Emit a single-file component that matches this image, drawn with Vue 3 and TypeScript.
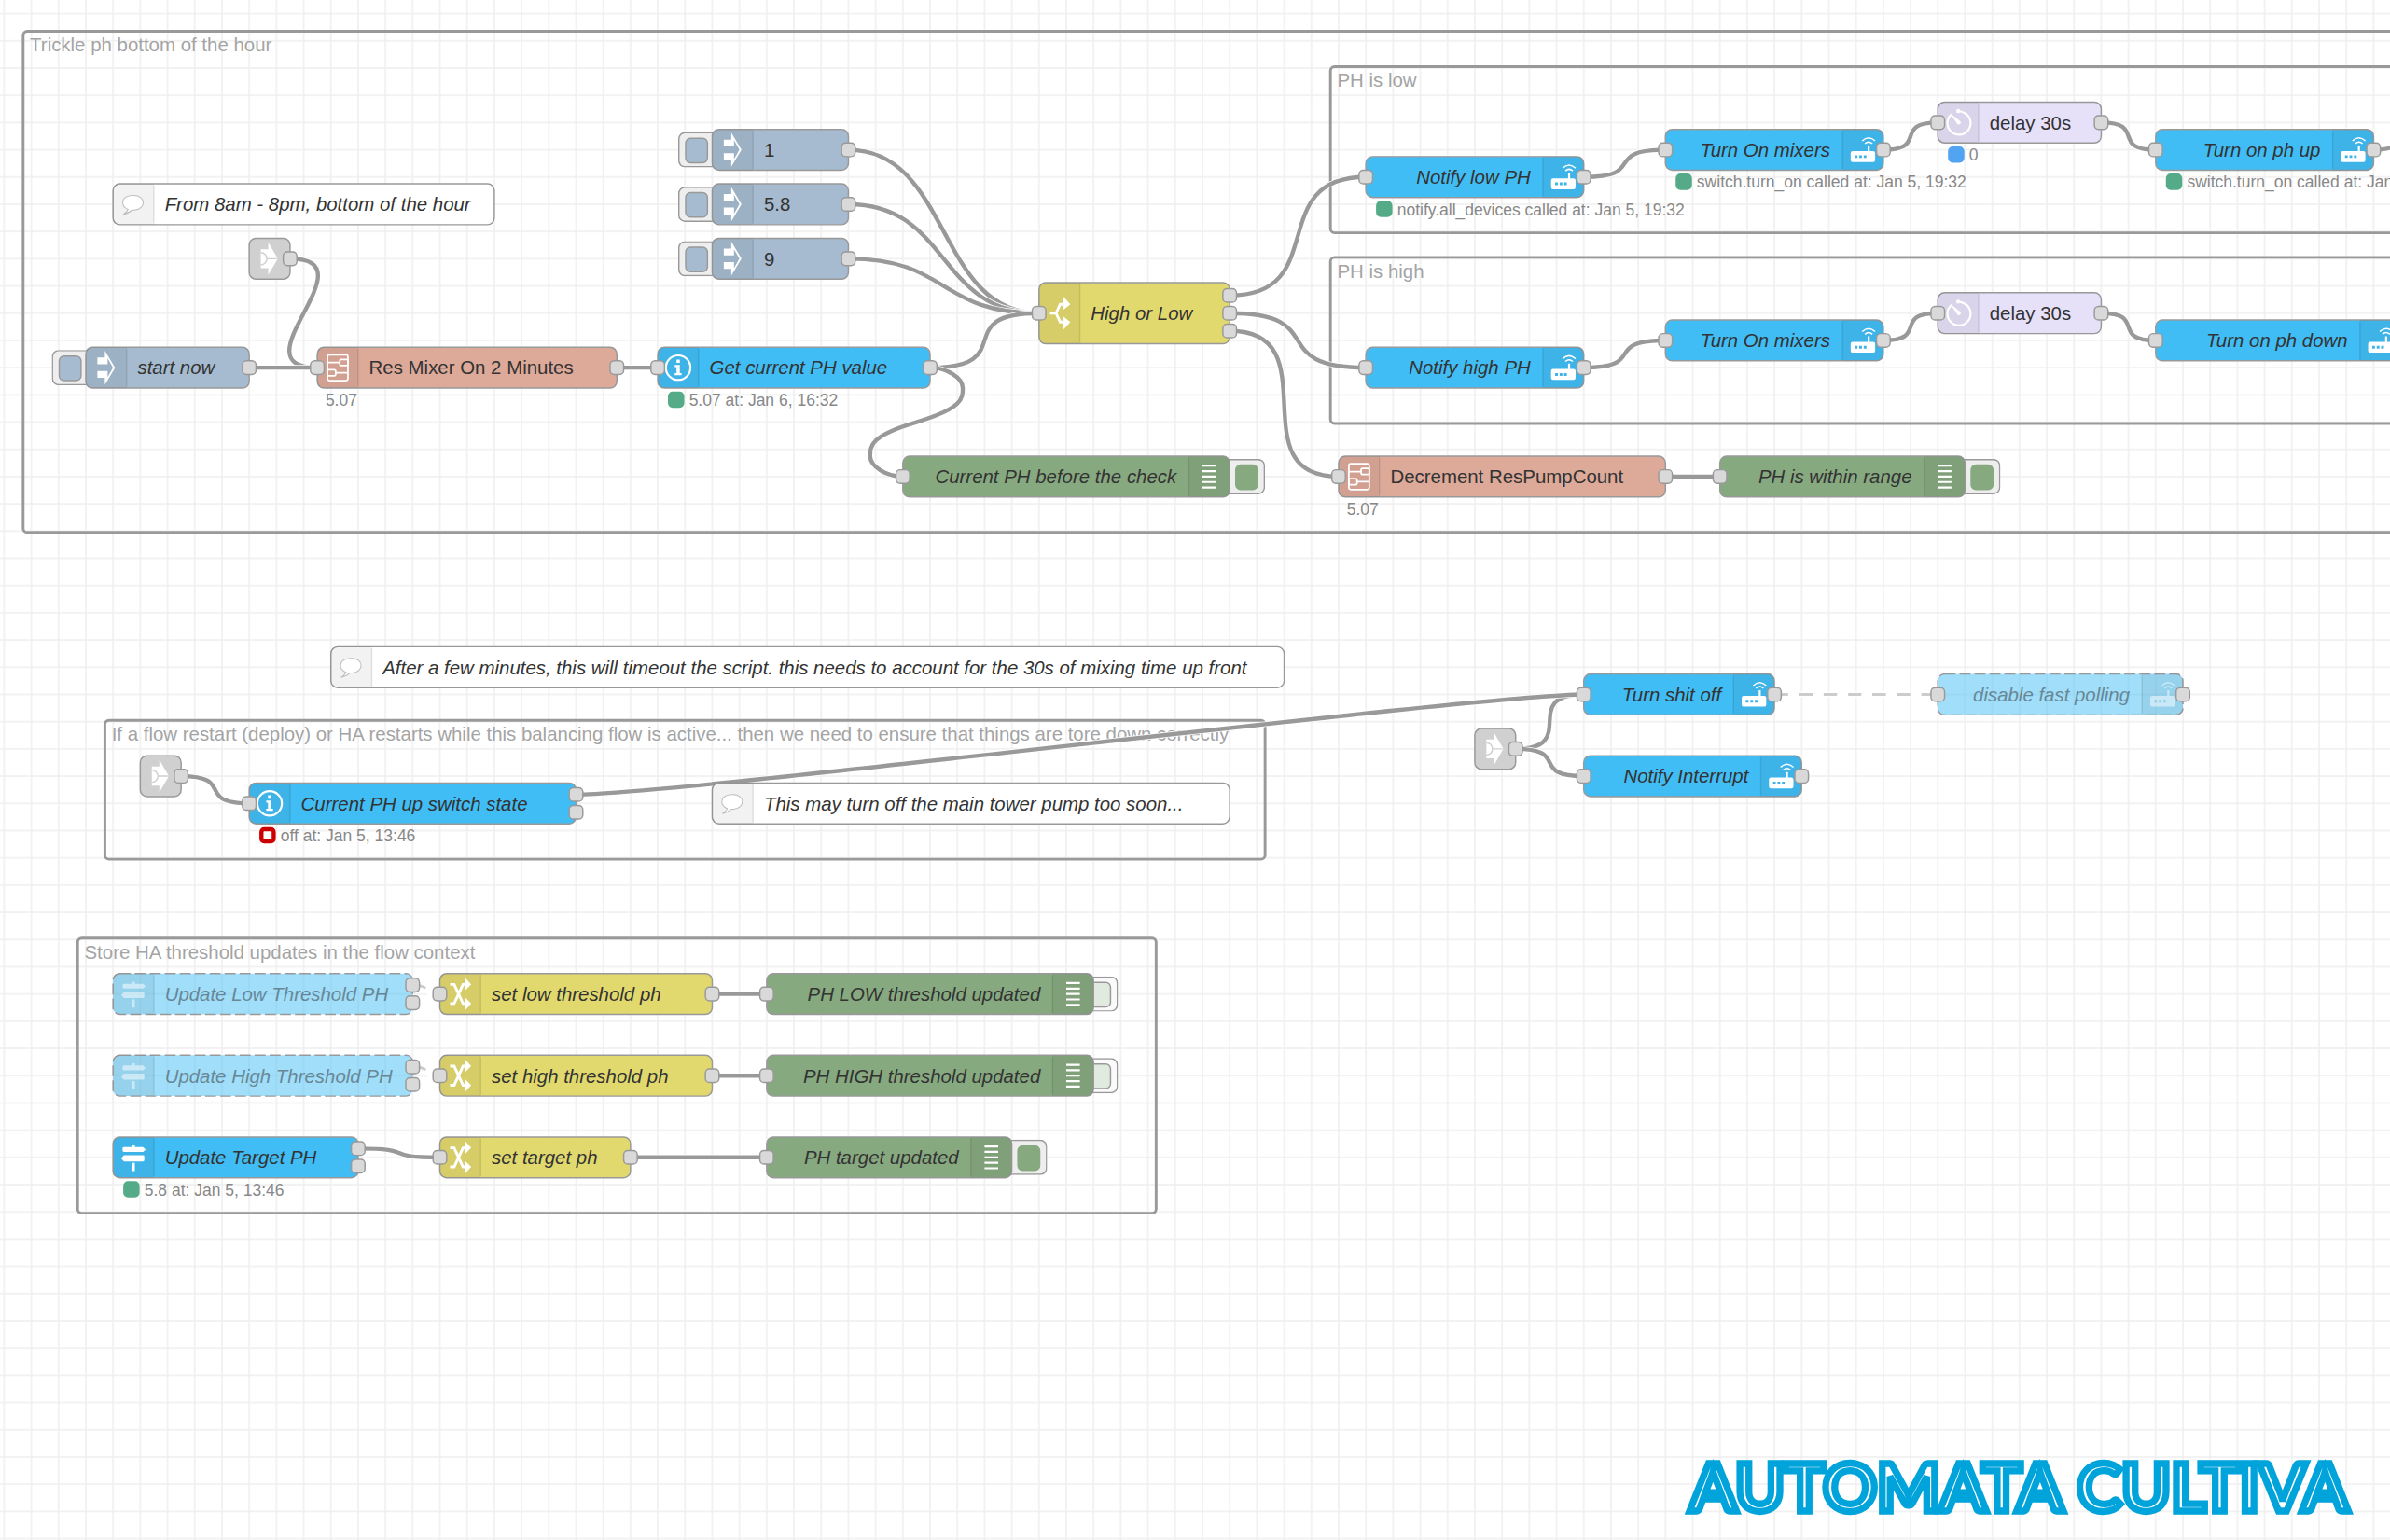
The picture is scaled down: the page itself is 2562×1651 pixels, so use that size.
<script setup lang="ts">
type Kind = 'inject' | 'debug' | 'subflow' | 'state' | 'service' | 'events' | 'switch' | 'change' | 'delay' | 'comment' | 'link'

interface FlowNode {
  id: string
  kind: Kind
  x: number
  cy: number
  w: number
  label?: string
  plain?: boolean
  inputs?: number
  outputs?: number
  off?: boolean
  muted?: boolean
  status?: { text: string; dot?: 'green' | 'blue' | 'ring' }
}

interface Group { x: number; y: number; w: number; h: number; label: string }

const groups: Group[] = [
  { x: 17, y: 23, w: 1900, h: 368, label: 'Trickle ph bottom of the hour' },
  { x: 977, y: 49, w: 900, h: 122, label: 'PH is low' },
  { x: 977, y: 189, w: 900, h: 122, label: 'PH is high' },
  { x: 77, y: 529, w: 852, h: 102, label: 'If a flow restart (deploy) or HA restarts while this balancing flow is active... then we need to ensure that things are tore down correctly' },
  { x: 57, y: 689, w: 792, h: 202, label: 'Store HA threshold updates in the flow context' },
]

const nodes: FlowNode[] = [
  { id: 'c1', kind: 'comment', x: 83, cy: 150, w: 280, label: 'From 8am - 8pm, bottom of the hour' },
  { id: 'l1', kind: 'link', x: 183, cy: 190, w: 30, outputs: 1 },
  { id: 'start', kind: 'inject', x: 63, cy: 270, w: 120, label: 'start now', outputs: 1 },
  { id: 'res', kind: 'subflow', x: 233, cy: 270, w: 220, label: 'Res Mixer On 2 Minutes', plain: true, inputs: 1, outputs: 1, status: { text: '5.07' } },
  { id: 'get', kind: 'state', x: 483, cy: 270, w: 200, label: 'Get current PH value', inputs: 1, outputs: 1, status: { text: '5.07 at: Jan 6, 16:32', dot: 'green' } },
  { id: 'i1', kind: 'inject', x: 523, cy: 110, w: 100, label: '1', plain: true, outputs: 1 },
  { id: 'i2', kind: 'inject', x: 523, cy: 150, w: 100, label: '5.8', plain: true, outputs: 1 },
  { id: 'i3', kind: 'inject', x: 523, cy: 190, w: 100, label: '9', plain: true, outputs: 1 },
  { id: 'sw', kind: 'switch', x: 763, cy: 230, w: 140, label: 'High or Low', inputs: 1, outputs: 3 },
  { id: 'd1', kind: 'debug', x: 663, cy: 350, w: 240, label: 'Current PH before the check', inputs: 1 },
  { id: 'nl', kind: 'service', x: 1003, cy: 130, w: 160, label: 'Notify low PH', inputs: 1, outputs: 1, status: { text: 'notify.all_devices called at: Jan 5, 19:32', dot: 'green' } },
  { id: 'm1', kind: 'service', x: 1223, cy: 110, w: 160, label: 'Turn On mixers', inputs: 1, outputs: 1, status: { text: 'switch.turn_on called at: Jan 5, 19:32', dot: 'green' } },
  { id: 't1', kind: 'delay', x: 1423, cy: 90, w: 120, label: 'delay 30s', plain: true, inputs: 1, outputs: 1, status: { text: '0', dot: 'blue' } },
  { id: 'up', kind: 'service', x: 1583, cy: 110, w: 160, label: 'Turn on ph up', inputs: 1, outputs: 1, status: { text: 'switch.turn_on called at: Jan 5, 19:32', dot: 'green' } },
  { id: 't3', kind: 'delay', x: 1783, cy: 90, w: 120, inputs: 1, outputs: 1 },
  { id: 'nh', kind: 'service', x: 1003, cy: 270, w: 160, label: 'Notify high PH', inputs: 1, outputs: 1 },
  { id: 'm2', kind: 'service', x: 1223, cy: 250, w: 160, label: 'Turn On mixers', inputs: 1, outputs: 1 },
  { id: 't2', kind: 'delay', x: 1423, cy: 230, w: 120, label: 'delay 30s', plain: true, inputs: 1, outputs: 1 },
  { id: 'dn', kind: 'service', x: 1583, cy: 250, w: 180, label: 'Turn on ph down', inputs: 1, outputs: 1 },
  { id: 'dec', kind: 'subflow', x: 983, cy: 350, w: 240, label: 'Decrement ResPumpCount', plain: true, inputs: 1, outputs: 1, status: { text: '5.07' } },
  { id: 'd2', kind: 'debug', x: 1263, cy: 350, w: 180, label: 'PH is within range', inputs: 1 },
  { id: 'c2', kind: 'comment', x: 243, cy: 490, w: 700, label: 'After a few minutes, this will timeout the script. this needs to account for the 30s of mixing time up front' },
  { id: 'l2', kind: 'link', x: 103, cy: 570, w: 30, outputs: 1 },
  { id: 'cur', kind: 'state', x: 183, cy: 590, w: 240, label: 'Current PH up switch state', inputs: 1, outputs: 2, status: { text: 'off at: Jan 5, 13:46', dot: 'ring' } },
  { id: 'c3', kind: 'comment', x: 523, cy: 590, w: 380, label: 'This may turn off the main tower pump too soon...' },
  { id: 'l3', kind: 'link', x: 1083, cy: 550, w: 30, outputs: 1 },
  { id: 'off', kind: 'service', x: 1163, cy: 510, w: 140, label: 'Turn shit off', inputs: 1, outputs: 1 },
  { id: 'fast', kind: 'service', x: 1423, cy: 510, w: 180, label: 'disable fast polling', inputs: 1, outputs: 1, off: true },
  { id: 'int', kind: 'service', x: 1163, cy: 570, w: 160, label: 'Notify Interrupt', inputs: 1, outputs: 1 },
  { id: 'ul', kind: 'events', x: 83, cy: 730, w: 220, label: 'Update Low Threshold PH', outputs: 2, off: true },
  { id: 'sl', kind: 'change', x: 323, cy: 730, w: 200, label: 'set low threshold ph', inputs: 1, outputs: 1 },
  { id: 'd3', kind: 'debug', x: 563, cy: 730, w: 240, label: 'PH LOW threshold updated', inputs: 1, muted: true },
  { id: 'uh', kind: 'events', x: 83, cy: 790, w: 220, label: 'Update High Threshold PH', outputs: 2, off: true },
  { id: 'sh', kind: 'change', x: 323, cy: 790, w: 200, label: 'set high threshold ph', inputs: 1, outputs: 1 },
  { id: 'd4', kind: 'debug', x: 563, cy: 790, w: 240, label: 'PH HIGH threshold updated', inputs: 1, muted: true },
  { id: 'ut', kind: 'events', x: 83, cy: 850, w: 180, label: 'Update Target PH', outputs: 2, status: { text: '5.8 at: Jan 5, 13:46', dot: 'green' } },
  { id: 'st', kind: 'change', x: 323, cy: 850, w: 140, label: 'set target ph', inputs: 1, outputs: 1 },
  { id: 'd5', kind: 'debug', x: 563, cy: 850, w: 180, label: 'PH target updated', inputs: 1 },
]

// [source node, output index, target node]
const wires: [string, number, string][] = [
  ['l1', 0, 'res'], ['start', 0, 'res'], ['res', 0, 'get'],
  ['i1', 0, 'sw'], ['i2', 0, 'sw'], ['i3', 0, 'sw'], ['get', 0, 'sw'], ['get', 0, 'd1'],
  ['sw', 0, 'nl'], ['sw', 1, 'nh'], ['sw', 2, 'dec'], ['dec', 0, 'd2'],
  ['nl', 0, 'm1'], ['m1', 0, 't1'], ['t1', 0, 'up'], ['up', 0, 't3'],
  ['nh', 0, 'm2'], ['m2', 0, 't2'], ['t2', 0, 'dn'],
  ['l2', 0, 'cur'], ['l3', 0, 'off'], ['l3', 0, 'int'], ['cur', 0, 'off'], ['off', 0, 'fast'],
  ['ul', 0, 'sl'], ['sl', 0, 'd3'], ['uh', 0, 'sh'], ['sh', 0, 'd4'], ['ut', 0, 'st'], ['st', 0, 'd5'],
]

const height = (n: FlowNode) => Math.max(30, (n.outputs ?? 0) * 15)
const iconRight = (n: FlowNode) => n.kind === 'debug' || n.kind === 'service'
const portY = (n: FlowNode, i: number) => height(n) / 2 - (((n.outputs ?? 1) - 1) / 2) * 13 + i * 13
const find = (id: string) => nodes.find((n) => n.id === id) as FlowNode

function curve(x1: number, y1: number, x2: number, y2: number): string {
  const span = 100
  const dx = x2 - x1
  const dy = y2 - y1
  const dist = Math.hypot(dx, dy)
  if (dx > 0) {
    const reach = dist < span ? 0.75 * dist : 75
    return `M${x1} ${y1}C${x1 + reach} ${y1} ${x2 - reach} ${y2} ${x2} ${y2}`
  }
  const reach = span * (0.4 - 0.2 * Math.max(0, (span - Math.min(Math.abs(dx), Math.abs(dy))) / span))
  const half = 15
  const midX = x2 - dx / 2
  const midY = y2 - dy / 2
  const quarter = (y2 + midY) / 2
  const topX = x1 + reach
  const topY = Math.min(quarter - dy / 2, y1 + half)
  const bottomX = x2 - reach
  const bottomY = Math.max(quarter, y2 - half)
  return `M${x1} ${y1}C${(x1 + topX) / 2} ${y1} ${topX} ${topY - half / 2} ${topX} ${topY}` +
    `S${topX} ${Math.min(midY, topY + half)} ${midX} ${midY}` +
    `S${bottomX} ${bottomY - half / 2} ${bottomX} ${bottomY}` +
    `S${(x2 + bottomX) / 2} ${y2} ${x2} ${y2}`
}

const links = wires.map(([from, port, to]) => {
  const a = find(from)
  const b = find(to)
  return {
    key: `${from}-${port}-${to}`,
    off: !!(a.off || b.off),
    d: curve(a.x + a.w, a.cy - height(a) / 2 + portY(a, port), b.x, b.cy),
  }
})
</script>

<template>
  <main class="workspace">
    <svg class="canvas" viewBox="0 0 1756 1131" preserveAspectRatio="xMinYMin slice">
      <defs>
        <pattern id="grid" x="3" y="10" width="20" height="20" patternUnits="userSpaceOnUse">
          <path class="grid-line" d="M0 0H20M0 20H20M0 0V20M20 0V20" />
        </pattern>
      </defs>
      <rect class="grid" width="100%" height="100%" fill="url(#grid)" />

      <g v-for="g in groups" :key="g.label">
        <rect class="group" :x="g.x" :y="g.y" :width="g.w" :height="g.h" rx="3" />
        <text class="group-label" :x="g.x + 5" :y="g.y + 15">{{ g.label }}</text>
      </g>

      <g v-for="l in links" :key="l.key" :class="['wire', { off: l.off }]">
        <path class="wire-edge" :d="l.d" />
        <path class="wire-line" :d="l.d" />
      </g>

      <g v-for="n in nodes" :key="n.id" :class="['node', n.kind, { off: n.off }]" :transform="`translate(${n.x} ${n.cy - height(n) / 2})`">
        <foreignObject v-if="n.kind === 'inject'" x="-25" y="2" width="32" height="26">
          <button class="trigger" type="button" :aria-label="`Inject ${n.label}`"><span class="key"></span></button>
        </foreignObject>
        <foreignObject v-if="n.kind === 'debug'" :x="n.w - (n.muted ? 14 : 6)" y="2" width="32" height="26">
          <button :class="['trigger', 'after', { muted: n.muted }]" type="button" :aria-label="`Toggle ${n.label}`"><span class="key"></span></button>
        </foreignObject>

        <rect class="body" :width="n.w" :height="height(n)" rx="5" />
        <g :transform="`translate(${iconRight(n) ? n.w - 30 : 0} 0)`">
          <template v-if="n.kind !== 'link'">
            <path v-if="iconRight(n)" class="shade" :d="`M0 0H25Q30 0 30 5V${height(n) - 5}Q30 ${height(n)} 25 ${height(n)}H0Z`" />
            <path v-else class="shade" :d="`M5 0H30V${height(n)}H5Q0 ${height(n)} 0 ${height(n) - 5}V5Q0 0 5 0Z`" />
            <path class="divider" :d="iconRight(n) ? `M0 1V${height(n) - 1}` : `M30 1V${height(n) - 1}`" />
          </template>
          <g class="icon" :transform="`translate(0 ${height(n) / 2 - 15})`">
            <path v-if="n.kind === 'inject'" class="solid" fill-rule="evenodd" d="M8.500 7.500H14V2.500L21.500 15 14 27.500V22.500H8.500V17.500H16V12.500H8.500ZM16 8V22L20 15Z" />
            <template v-else-if="n.kind === 'link'">
              <path class="solid" d="M8.500 8H14V3L21 15 14 27V22H8.500Z" />
              <path class="link-cut" d="M8.500 10.500A4.500 4.500 0 0 1 8.500 19.500M13 15H21" />
            </template>
            <g v-else-if="n.kind === 'subflow'" class="line strong">
              <rect x="7.500" y="5.500" width="15" height="19" rx="1.500" />
              <rect x="16.500" y="9" width="6" height="4.500" rx="1" />
              <rect x="7.500" y="16.500" width="6" height="4.500" rx="1" />
              <path d="M7.500 11.300H16.500M13.500 18.800H22.500" />
            </g>
            <template v-else-if="n.kind === 'state'">
              <circle class="line thick" cx="15" cy="15" r="9" />
              <path class="solid" d="M13.800 9H16.200V11.500H13.800ZM12.500 13H16.200V19H17.500V20.500H12.500V19H13.800V14.500H12.500Z" />
            </template>
            <template v-else-if="n.kind === 'service'">
              <path class="solid" fill-rule="evenodd" d="M7.500 16H18.500V12H20V16H22.500Q24 16 24 17.500V22.500Q24 24 22.500 24H7.500Q6 24 6 22.500V17.500Q6 16 7.500 16ZM9 19V21H11V19ZM12.300 19V21H14.300V19ZM15.600 19V21H17.600V19Z" />
              <path class="line" d="M14.500 8.500Q19.200 4 24 8.500M16.500 10.500Q19.200 8 22 10.500" />
            </template>
            <path v-else-if="n.kind === 'events'" class="solid" d="M14 6H16V7.500H22L24 9.300 22 11H8Q7 11 7 10V8.500Q7 7.500 8 7.500H14ZM8 13.500H22Q23 13.500 23 14.500V17Q23 18 22 18H8L6 15.800ZM14 19H16V25H14Z" />
            <template v-else-if="n.kind === 'switch'">
              <path class="line heavy" d="M8 15H12.500L15.500 8.500H18M12.500 15L15.500 21.500H18" />
              <path class="solid" d="M18 3L23 8.500 18 12.500ZM18 27L23 21.500 18 17.500Z" />
            </template>
            <template v-else-if="n.kind === 'change'">
              <path class="line heavy" d="M7.500 8H10.500L17 22H19M7.500 22H10.500L17 8H19" />
              <path class="solid" d="M18.500 3L23 8 18.500 12.500ZM18.500 17.500L23 22 18.500 27Z" />
            </template>
            <template v-else-if="n.kind === 'delay'">
              <path class="line thick" d="M10 9A8.500 8.500 0 1 0 20.500 8.500Q18.500 7 15.500 6.500" />
              <circle class="solid" cx="15" cy="6.500" r="1.500" />
              <path class="solid" d="M9 8L16.500 14A1.500 1.500 0 0 1 14.500 16.200Z" />
            </template>
            <path v-else-if="n.kind === 'debug'" class="bars" d="M10 7H20M10 11H20M10 15H20M10 19H20M10 23H20" />
            <path v-else class="bubble" d="M11 18.800C5 16.500 5.500 8.500 15 8.500S24.500 18.500 15.500 19.300L14 19.300Q11.500 21.500 7.500 22.500Q10.500 20.500 11 18.800Z" />
          </g>
        </g>

        <text v-if="n.label" :class="['label', { plain: n.plain, end: iconRight(n) }]" :x="iconRight(n) ? n.w - 39 : 38" :y="height(n) / 2 + 5">{{ n.label }}</text>
        <rect v-if="n.inputs" class="port" x="-5" :y="height(n) / 2 - 5" width="10" height="10" rx="3" />
        <rect v-for="i in n.outputs ?? 0" :key="i" class="port" :x="n.w - 5" :y="portY(n, i - 1) - 5" width="10" height="10" rx="3" />

        <g v-if="n.status" :transform="`translate(3 ${height(n) + 3})`">
          <rect v-if="n.status.dot" :class="['dot', n.status.dot]" x="6" y="1" width="9" height="9" rx="2" />
          <text class="status" :x="n.status.dot ? 20 : 3" y="10">{{ n.status.text }}</text>
        </g>
      </g>

      <text class="brand" x="1241" y="1110">AUTOMATA CULTIVA</text>
    </svg>
  </main>
</template>

<style>
body { margin: 0; background: #fff; }
</style>

<style scoped>
.workspace { width: 100%; height: 100vh; overflow: hidden; background: #fff; }
.canvas { display: block; width: 100%; height: 100%; font-family: "Helvetica Neue", "Liberation Sans", Arial, sans-serif; }
.grid-line { fill: none; stroke: #eee; stroke-width: 1px; }

.group { fill: none; stroke: #999; stroke-width: 2px; }
.group-label { font-size: 14px; fill: #a4a4a4; }

.wire path { fill: none; }
.wire-edge { stroke: #fff; stroke-width: 4px; }
.wire-line { stroke: #999; stroke-width: 3px; }
.wire.off .wire-line { stroke: #ccc; stroke-width: 2px; stroke-dasharray: 10 8; }

.body { stroke: #999; stroke-width: 1px; }
.inject .body { fill: #a6bbcf; }
.debug .body { fill: #87a980; }
.subflow .body { fill: #dda999; }
.state .body, .service .body, .events .body { fill: #41bdf5; }
.switch .body, .change .body { fill: #e2d96e; }
.delay .body { fill: #e6e0f8; }
.comment .body { fill: #fff; }
.link .body { fill: #d0d0d0; }
.off .body { fill-opacity: 0.5; stroke-dasharray: 8 3; }
.off .icon, .off .label { opacity: 0.5; }

.shade { fill: #000; fill-opacity: 0.05; }
.divider { fill: none; stroke: #000; stroke-opacity: 0.1; stroke-width: 1px; }
.solid { fill: #fff; }
.line { fill: none; stroke: #fff; stroke-width: 1px; }
.line.strong { stroke-width: 1.2px; }
.line.thick { stroke-width: 1.5px; }
.line.heavy { stroke-width: 2px; }
.bars { fill: none; stroke: #fff; stroke-width: 1.5px; }
.link-cut { fill: none; stroke: #d0d0d0; stroke-width: 1px; }
.bubble { fill: #fff; stroke: #bbb; stroke-width: 0.7px; }

.label { font-size: 14px; font-style: italic; fill: #333; }
.label.plain { font-style: normal; }
.label.end { text-anchor: end; }
.port { fill: #d9d9d9; stroke: #999; stroke-width: 1px; }

.status { font-size: 12px; fill: #888; }
.dot { stroke-width: 3px; }
.dot.green { fill: #5a8; stroke: #5a8; }
.dot.blue { fill: #53a3f3; stroke: #53a3f3; }
.dot.ring { fill: #fff; stroke: #c00; }

.trigger {
  display: flex;
  align-items: center;
  box-sizing: border-box;
  width: 32px;
  height: 26px;
  margin: 0;
  padding: 0 4px;
  border: 1px solid #999;
  border-radius: 5px;
  background: #eee;
}
.trigger.after { justify-content: flex-end; }
.trigger.muted { background: #fafafa; }
.key { box-sizing: border-box; width: 17px; height: 19px; border: 1px solid #999; border-radius: 4px; background: #a6bbcf; }
.after .key { border-color: #87a980; background: #87a980; }
.muted .key { border-color: #999; background: #e1eadf; }

/* A heavy outline over a white fill leaves a thin light line inside each letter. */
.brand { font-family: Lato, "Open Sans", sans-serif; font-size: 49px; font-weight: 700; fill: #fff; stroke: #00a3da; stroke-width: 5px; }
</style>
